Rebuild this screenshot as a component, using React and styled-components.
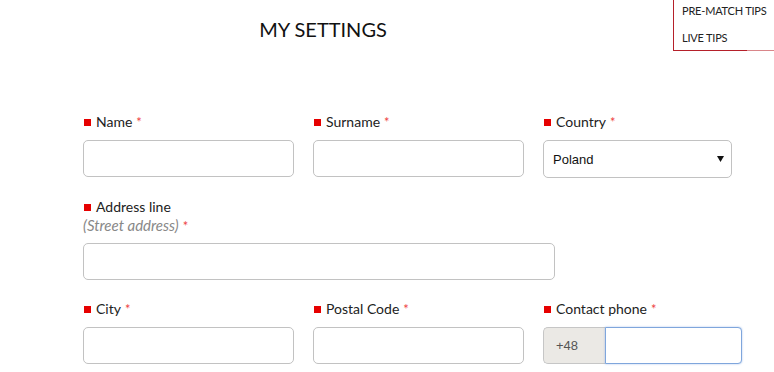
import styled, { createGlobalStyle } from "styled-components";

const GlobalStyle = createGlobalStyle`
  body {
    margin: 0;
    background: #fff;
    font-family: Lato, "Open Sans", sans-serif;
    color: #222;
  }
`;

const Page = styled.div`
  position: relative;
  width: 774px;
  height: 372px;
  overflow: hidden;
`;

const Menu = styled.ul`
  position: absolute;
  top: 0;
  left: 673px;
  width: 101px;
  height: 51px;
  margin: 0;
  padding: 0 0 0 8px;
  box-sizing: border-box;
  list-style: none;
  background: #fff;
  border-left: 1px solid #b5202a;
  border-bottom: 1px solid #b5202a;

  &::after {
    content: "";
    position: absolute;
    right: 0;
    bottom: -1px;
    width: 27px;
    height: 1px;
    background: #d9868a;
  }
`;

const MenuItem = styled.li`
  font-size: 11px;
  line-height: 14px;
  text-transform: uppercase;
  letter-spacing: -0.2px;
  color: #222;
  padding-top: ${(p) => p.$top}px;
`;

const Header = styled.header`
  width: 646px;
  padding-top: 15px;
  height: 112px;
  box-sizing: border-box;
  text-align: center;
`;

const Title = styled.h1`
  margin: 0;
  font-size: 20px;
  font-weight: 400;
  line-height: 28px;
  color: #111;
`;

const Form = styled.form`
  padding-left: 83px;
  display: grid;
  grid-template-columns: 211px 211px 199px;
  column-gap: 19px;
  row-gap: 19px;
`;

const Field = styled.div`
  display: flex;
  flex-direction: column;
  grid-column: ${(p) => (p.$wide ? "span 3" : "auto")};
`;

const LabelBlock = styled.div`
  margin-bottom: 8px;
`;

const Label = styled.label`
  display: flex;
  align-items: center;
  font-size: 14px;
  line-height: 20px;
  color: #222;

  &::before {
    content: "";
    width: 7px;
    height: 7px;
    margin: 1px 5px 0 1px;
    background: #e60000;
  }
`;

const Hint = styled.div`
  font-size: 15px;
  font-style: italic;
  line-height: 17px;
  color: #888;
`;

const Req = styled.span`
  color: #ee4444;
  margin-left: 4px;
  font-size: 13px;
  font-style: normal;
`;

const Input = styled.input`
  box-sizing: border-box;
  width: ${(p) => p.$width || 211}px;
  height: 37px;
  border: 1px solid #c2c2c2;
  border-radius: 5px;
  padding: 0 10px;
  font: 13px "Liberation Sans", Arial, sans-serif;
  outline: none;
`;

const SelectWrap = styled.div`
  position: relative;
  width: 189px;
`;

const Select = styled.select`
  box-sizing: border-box;
  appearance: none;
  width: 100%;
  height: 38px;
  border: 1px solid #c2c2c2;
  border-radius: 5px;
  padding: 0 9px;
  background: #fff;
  color: #111;
  font: 13px "Liberation Sans", Arial, sans-serif;
  outline: none;
`;

const Arrow = styled.svg`
  position: absolute;
  right: 8px;
  top: 16px;
  pointer-events: none;
`;

const PhoneGroup = styled.div`
  display: flex;
  width: 199px;
  height: 37px;
`;

const Prefix = styled.span`
  box-sizing: border-box;
  flex: 0 0 62px;
  display: flex;
  align-items: center;
  padding-left: 12px;
  background: #ebe9e5;
  border: 1px solid #c6c6c6;
  border-right: none;
  border-radius: 5px 0 0 5px;
  color: #555;
  font: 13px "Liberation Sans", Arial, sans-serif;
`;

const PhoneInput = styled.input`
  box-sizing: border-box;
  flex: 1 1 0;
  min-width: 0;
  width: 0;
  height: 37px;
  border: 1px solid #7fa6dc;
  border-radius: 0 4px 4px 0;
  box-shadow: 0 0 2px rgba(102, 150, 220, 0.6);
  outline: none;
`;

const fields = [
  { label: "Name" },
  { label: "Surname" },
];

const App = () => {
  return (
    <Page>
      <GlobalStyle />
      <Menu>
        <MenuItem $top={4}>Pre-match tips</MenuItem>
        <MenuItem $top={13}>Live tips</MenuItem>
      </Menu>

      <Header>
        <Title>MY SETTINGS</Title>
      </Header>

      <Form>
        {fields.map((f) => (
          <Field key={f.label}>
            <LabelBlock>
              <Label>
                {f.label}
                <Req>*</Req>
              </Label>
            </LabelBlock>
            <Input />
          </Field>
        ))}
        <Field>
          <LabelBlock>
            <Label>
              Country<Req>*</Req>
            </Label>
          </LabelBlock>
          <SelectWrap>
            <Select defaultValue="Poland">
              <option>Poland</option>
            </Select>
            <Arrow width="7" height="6" viewBox="0 0 7 6">
              <path d="M0 0h7L3.5 6z" fill="#111" />
            </Arrow>
          </SelectWrap>
        </Field>

        <Field $wide>
          <LabelBlock>
            <Label>Address line</Label>
            <Hint>
              (Street address)<Req>*</Req>
            </Hint>
          </LabelBlock>
          <Input $width={472} />
        </Field>

        <Field>
          <LabelBlock>
            <Label>
              City<Req>*</Req>
            </Label>
          </LabelBlock>
          <Input />
        </Field>
        <Field>
          <LabelBlock>
            <Label>
              Postal Code<Req>*</Req>
            </Label>
          </LabelBlock>
          <Input />
        </Field>
        <Field>
          <LabelBlock>
            <Label>
              Contact phone<Req>*</Req>
            </Label>
          </LabelBlock>
          <PhoneGroup>
            <Prefix>+48</Prefix>
            <PhoneInput />
          </PhoneGroup>
        </Field>
      </Form>
    </Page>
  );
};

export default App;
